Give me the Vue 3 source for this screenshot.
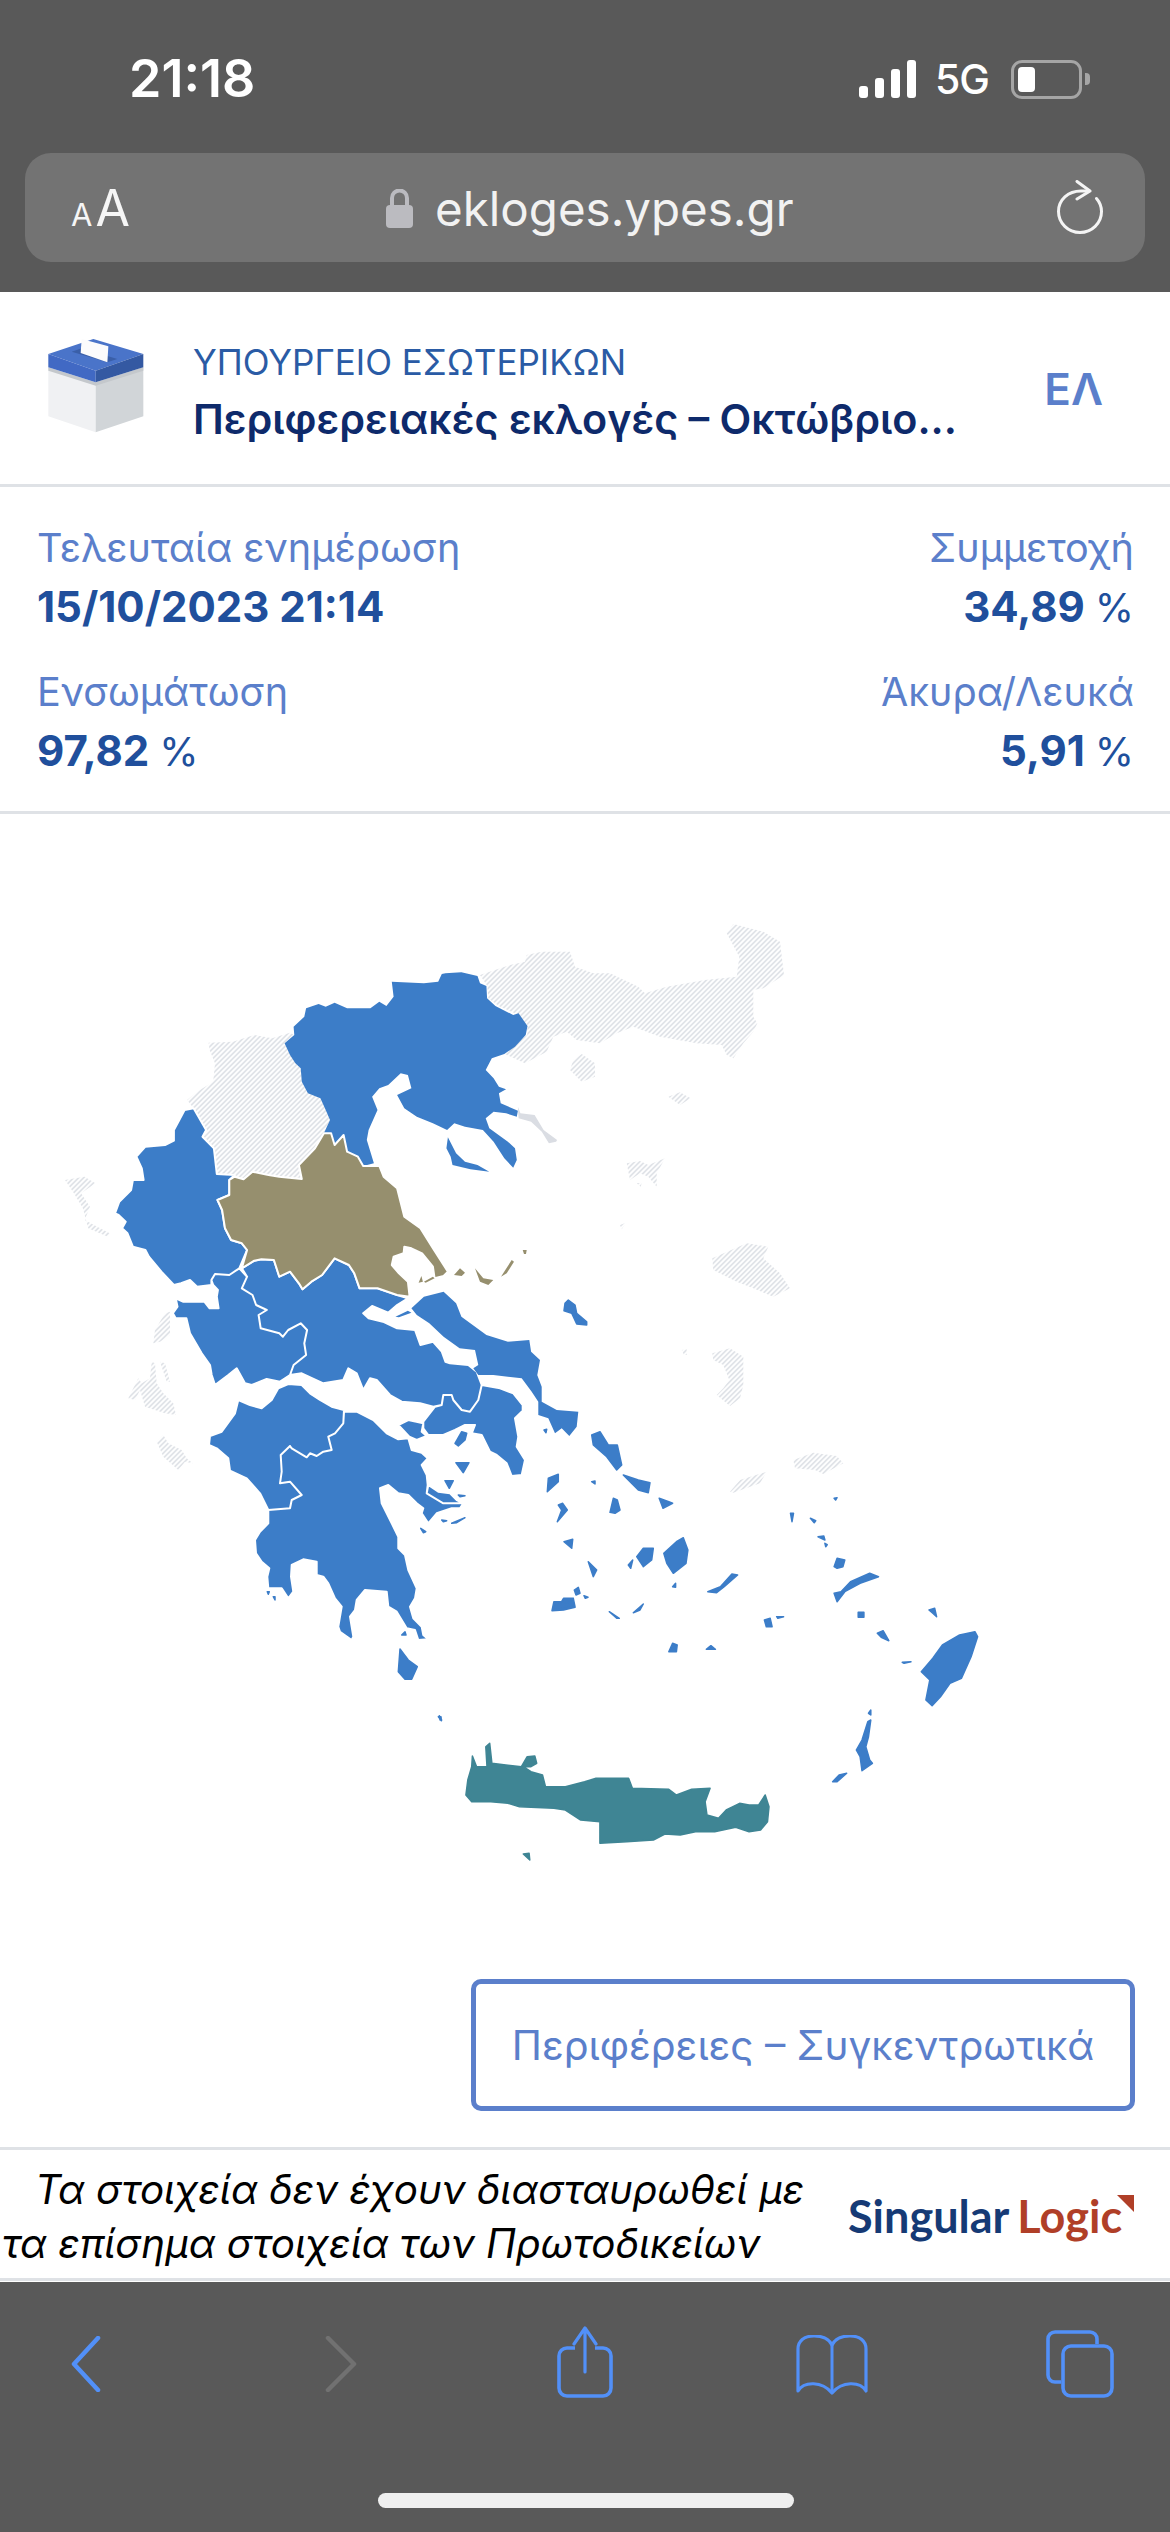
<script setup>
const zooms = {
  a: { x: 40, y: 900, sx: 2.8 },
  b: { x: 400, y: 900, sx: 3 },
  c: { x: 160, y: 1350, sx: 3 },
  d: { x: 420, y: 1400, sx: 2.613 },
  e: { x: 110, y: 1300, sx: 3 },
  f: { x: 680, y: 1320, sx: 3 }
}
function shape(...segments) {
  const pts = []
  for (const [z, text] of segments) {
    const m = zooms[z]
    for (const p of text.trim().split(/\s+/)) {
      const [x, y] = p.split(',').map(Number)
      pts.push((m.x + x / m.sx).toFixed(1) + ' ' + (m.y + y / 3).toFixed(1))
    }
  }
  return 'M' + pts.join('L') + 'Z'
}
function many(z, list) {
  return list.map((t) => shape([z, t])).join('')
}

const hatched = [
  shape(['b', '240,225 330,195 375,185 380,165 425,155 510,155 525,200 580,220 630,220 715,260 735,280 800,260 915,240 1010,230 1018,170 980,100 1000,72 1090,95 1140,125 1152,225 1090,265 1060,270 1060,350 1072,370 1060,395 1030,430 1000,475 980,465 965,435 890,430 780,410 700,380 650,400 600,430 530,420 500,395 460,410 440,455 375,490 310,460 345,430 382,405 382,375 345,340 300,320 265,295 262,258']),
  shape(['a', '472,428 540,425 600,405 650,415 700,398 712,405 685,430 700,465 730,505 733,545 750,580 785,595 800,630 812,660 795,700 770,745 725,795 733,837 670,830 640,825 595,815 570,838 545,825 495,822 485,790 470,745 455,710 465,690 430,625 412,600 440,575 485,545 490,490 475,450']),
  many('b', [
    '510,510 520,480 545,462 585,490 585,530 545,545',
    '805,590 840,577 872,595 840,615',
    '680,790 720,783 745,795 795,775 770,820 770,860 745,830 720,820 690,840',
    '710,850 725,848 722,860',
    '660,975 678,968 665,988',
    '937,1075 1040,1030 1105,1040 1090,1075 1140,1120 1170,1165 1120,1190 1060,1165 1010,1145 940,1110'
  ]),
  many('a', [
    '70,840 125,830 155,850 115,880 140,920 125,960 195,1000 190,1010 135,985 120,925 95,880'
  ]),
  many('e', [
    '130,130 135,90 165,40 180,35 180,105 150,125',
    '150,185 165,190 180,245 170,245',
    '55,295 85,235 95,250 120,235 125,185 135,190 140,250 160,280 190,310 198,345 165,340 105,320 90,270 75,300',
    '140,425 160,405 175,430 215,450 230,475 248,490 225,485 205,510 160,470'
  ]),
  many('f', [
    '97,100 150,85 190,110 190,195 180,235 150,258 110,225 130,205 148,180 130,135 100,120',
    '150,515 180,480 260,455 240,490 160,518',
    '340,420 400,398 470,408 490,430 430,462 405,450 345,445',
    '5,90 20,88 20,105 12,105'
  ])
].join('')

const athos = shape(['a', '1338,620 1345,640 1385,645 1410,690 1448,720 1445,725 1425,730 1405,695 1375,665 1340,655'])

const macedonia =
  shape(['a', '1135,220 1180,217 1225,228 1232,250 1250,258 1252,295 1275,318 1325,345 1340,340 1365,378 1360,405 1330,440 1300,462 1265,475 1248,510 1270,535 1285,560 1305,568 1285,580 1290,610 1338,632 1335,650 1305,640 1270,635 1248,655 1258,685 1310,725 1330,745 1335,780 1325,803 1300,775 1270,725 1240,690 1190,680 1160,670 1140,690 1100,670 1055,650 1020,625 1000,585 1040,565 1030,525 1010,520 975,555 950,565 930,590 945,630 920,690 915,720 935,790 905,798 890,770 860,755 850,705 825,735 815,700 795,700 812,660 800,630 785,595 750,580 733,545 730,505 715,490 700,465 685,430 712,405 710,380 740,350 745,325 780,312 800,320 825,308 860,325 890,325 925,325 950,305 970,318 990,290 985,245 1075,250 1115,245 1125,222']) +
  shape(['a', '1142,712 1165,760 1190,785 1225,795 1258,815 1205,808 1155,795 1150,770 1138,745'])

const thessaly =
  shape(['a', '795,700 815,700 825,735 850,705 860,755 890,770 905,798 950,798 962,830 1000,865 1020,950 1065,985 1100,1045 1142,1115 1130,1128 1105,1135 1100,1100 1070,1060 1040,1045 1020,1040 1018,1060 990,1070 985,1095 1005,1120 1030,1145 1035,1190 1000,1185 945,1165 895,1165 880,1120 865,1095 825,1075 790,1125 760,1145 735,1168 725,1150 700,1115 670,1130 655,1080 620,1078 600,1082 565,1105 580,1050 565,1030 535,1020 518,985 510,930 497,900 530,885 530,840 545,830 570,838 595,815 640,825 670,830 733,837 725,795 770,745'])

const thessalyIslands = many('b', [
  '162,1125 180,1105 195,1118 185,1128',
  '225,1105 250,1135 280,1140 265,1155 240,1145',
  '303,1130 335,1080 342,1085 320,1120',
  '368,1050 380,1050 378,1062 372,1062'
]) + many('a', [
  '1060,1148 1068,1128 1072,1145',
  '1075,1145 1100,1130 1105,1135 1080,1148'
])

const mainland = [
  shape(['a', '405,630 430,625 465,690 455,710 487,745 495,822 545,825 530,840 530,885 497,900 510,930 518,985 535,1020 565,1030 580,1050 558,1105 530,1125 490,1122 480,1140 480,1155 440,1160 420,1140 395,1150 375,1155 340,1115 305,1070 295,1050 260,1040 245,1000 230,985 240,965 220,945 210,940 222,905 255,870 260,840 290,840 285,805 270,770 295,740 350,735 375,722 375,690 390,660']),
  shape(
    ['a', '558,1105 580,1130 565,1165 595,1185 605,1215 635,1230 612,1245 618,1285 670,1300 680,1310 695,1290 730,1270 748,1290 740,1330 745,1365 710,1395'],
    ['c', '390,75 360,95 320,87 275,105 255,100 230,55 205,75 165,105 155,75 150,45 125,10'],
    ['a', '420,1300 410,1255 380,1255 372,1240 385,1220 380,1195 400,1205 460,1205 475,1225 500,1225 495,1190 498,1170 485,1155 480,1140 490,1122 530,1125']
  ),
  shape(
    ['a', '565,1105 600,1082 620,1078 655,1080 670,1130 700,1115 725,1150 735,1168 760,1145 790,1125 825,1075 865,1095 880,1120 895,1165 945,1165 1000,1185 1030,1195 1000,1215 975,1238 930,1218 905,1240 920,1255 960,1265 1000,1285 1050,1290 1065,1335 1100,1325 1125,1355 1135,1385'],
    ['c', '870,40 925,45 950,65 965,105 955,150 930,185 905,180 880,150 875,135 850,135 845,165 820,170 780,160 725,155 690,135 650,90 630,85 610,120 590,70 565,55 550,90 490,100 425,70 390,75'],
    ['a', '710,1395 745,1365 740,1330 748,1290 730,1270 695,1290 680,1310 670,1300 618,1285 612,1245 635,1230 605,1215 595,1185 565,1165 580,1130']
  ),
  shape(['c', '965,105 1020,115 1060,130 1088,165 1088,182 1065,205 1075,260 1070,290 1095,330 1085,375 1055,378 1040,340 1010,315 990,305 965,255 935,250 945,225 915,225 885,240 850,255 805,255 790,235 790,215 825,170 845,165 850,135 875,135 880,150 905,180 930,185 955,150']),
  shape(['c', '235,150 270,165 305,175 335,150 355,115 385,102 425,105 450,130 480,150 515,170 552,180 550,220 525,250 505,260 515,300 490,305 470,318 450,310 440,322 395,295 390,288 362,315 365,365 360,400 390,395 425,435 395,450 390,475 325,480 300,430 260,385 210,362 205,325 170,295 147,285 150,258 185,245 225,190']),
  shape(['c', '552,185 590,185 640,210 680,250 715,268 745,265 755,300 785,308 803,325 785,345 800,375 803,405 800,430 850,460 885,460 910,460 900,475 875,475 830,490 805,520 785,490 790,475 770,460 745,435 715,430 685,405 660,415 665,460 695,520 715,560 715,595 735,615 745,660 770,715 765,745 750,770 760,805 785,830 790,855 805,868 775,870 765,840 740,835 710,785 685,770 680,725 615,720 590,750 585,780 570,800 580,860 575,870 540,845 535,830 545,770 525,745 505,700 490,680 470,675 470,635 430,628 395,645 393,680 400,725 385,745 365,715 325,715 322,680 328,655 305,635 288,610 285,570 300,545 325,520 325,480 390,475 395,450 425,435 390,395 360,400 365,365 362,315 390,288 395,295 440,322 450,310 470,318 490,305 515,300 505,260 525,250 550,220']),
  shape(['c', '805,405 835,425 870,430 890,450 910,460 885,460 850,460 800,430']),
  shape(['c', '715,225 745,210 790,220 785,245 800,258 770,270 748,260'])
].join('')

const evia = shape(
  ['a', '1075,1190 1130,1175 1165,1210 1180,1250 1250,1305 1310,1325 1370,1320 1375,1355 1400,1380 1390,1440'],
  ['c', '1105,0 1140,30 1128,65 1145,110 1145,155 1190,180 1255,185 1250,230 1228,258 1205,235 1185,250 1165,205 1135,195 1135,155 1115,125 1085,85 1000,75 955,75 940,55 955,45 945,0'],
  ['a', '1175,1345 1130,1310 1090,1270 1055,1245 1040,1225']
) + shape(['a', '995,1250 1030,1232 1040,1238 1005,1252'])

const blueIslands = many('c', [
  '885,280 905,245 920,250 915,270 895,288',
  '888,338 927,338 910,368',
  '855,392 880,392 868,415',
  '875,520 915,503 890,518',
  '782,535 797,545 790,548',
  '845,510 860,512 850,515',
  '895,435 915,437 900,440',
  '720,897 745,930 772,950 755,988 735,988 715,965',
  '725,855 735,845 738,855',
  '838,1097 845,1110 840,1110',
  '322,725 328,725 325,733',
  '340,740 345,740 345,750',
  '1295,255 1320,245 1345,285 1372,285 1385,345 1370,360 1340,320 1300,285',
  '1390,375 1435,390 1470,398 1465,428 1435,420',
  '1162,425 1165,385 1195,373 1195,395',
  '1295,395 1305,393 1305,402',
  '1192,515 1205,480 1195,465 1208,460 1222,480',
  '1350,487 1360,445 1372,450 1380,480 1365,490',
  '1212,575 1238,568 1235,595',
  '1285,635 1310,660 1300,680',
  '1430,620 1450,595 1480,595 1475,630 1450,650',
  '1405,645 1418,630 1412,655',
  '1180,780 1185,755 1208,760 1215,755 1222,760 1240,745 1245,770 1210,775',
  '1243,720 1255,712 1260,730 1248,735',
  '1272,737 1284,742 1276,745',
  '1348,785 1378,805 1370,805',
  '1420,788 1450,762 1440,780',
  '1152,240 1160,238 1158,248'
]) + many('b', [
  '495,1210 505,1200 525,1215 530,1240 560,1265 560,1275 530,1272 515,1240 492,1232'
]) + many('d', [
  '637,460 670,425 688,413 700,450 695,490 662,520 645,490',
  '752,575 785,560 815,522 830,525 795,560 775,578',
  '660,730 672,735 670,755 650,755',
  '748,748 760,737 772,748',
  '900,660 915,655 920,680 905,680',
  '932,650 950,650 935,655',
  '1082,580 1100,575 1125,545 1175,520 1198,530 1150,550 1110,575 1090,605',
  '1082,500 1090,475 1110,480 1105,500 1090,505',
  '1040,410 1055,408 1058,420',
  '1058,430 1064,434 1060,440',
  '968,340 976,340 972,365',
  '1020,355 1034,362 1030,368',
  '1082,295 1090,293 1086,300',
  '1145,637 1160,637 1160,652 1145,652',
  '1195,700 1210,692 1225,722 1205,712',
  '1330,630 1345,625 1350,650 1340,640',
  '1310,815 1340,775 1365,735 1410,705 1450,695 1457,710 1440,770 1415,835 1385,850 1360,890 1338,917 1322,900 1332,840',
  '1260,787 1283,785 1265,790',
  '1140,1050 1155,1020 1170,965 1178,960 1172,1010 1165,1040 1175,1080 1182,1090 1155,1112 1150,1070',
  '1172,940 1178,930 1178,945',
  '1078,1145 1095,1125 1115,1120 1090,1145',
  '625,295 650,305 660,310 635,325',
  '660,560 668,550 668,562',
  '48,950 55,950 56,962',
  '345,632 350,605 370,605 375,595 400,595 405,622 375,630'
])

const crete = shape(['d', '120,1185 125,1140 135,1100 137,1068 148,1100 175,1100 172,1040 182,1030 188,1090 265,1100 280,1070 300,1068 305,1090 290,1100 270,1100 290,1115 320,1125 328,1160 380,1160 430,1145 460,1135 545,1135 555,1165 650,1168 670,1185 710,1168 758,1165 745,1205 750,1245 780,1255 800,1230 835,1210 860,1215 885,1215 902,1185 912,1220 908,1265 890,1290 860,1295 825,1282 770,1295 720,1295 680,1305 640,1302 610,1320 540,1325 470,1330 470,1265 420,1260 380,1230 350,1225 260,1220 230,1210 185,1205 135,1205']) +
  shape(['d', '270,1362 285,1360 287,1380'])
</script>

<template>
  <div class="screen">
    <header class="browser">
      <div class="status">
        <span class="time">21:18</span>
        <div class="indicators">
          <div class="signal"><i class="b1"></i><i class="b2"></i><i class="b3"></i><i class="b4"></i></div>
          <span class="net">5G</span>
          <div class="battery"><i></i></div>
          <div class="nub"></div>
        </div>
      </div>
      <div class="urlbar">
        <span class="aa"><small>A</small>A</span>
        <div class="address">
          <svg class="lock" viewBox="0 0 27 39" width="27" height="39">
            <path d="M6 18V9a7.500 7.500 0 0 1 15 0v9" fill="none" stroke="#bbbbc0" stroke-width="4" />
            <rect x="0" y="16" width="27" height="23" rx="4" fill="#bbbbc0" />
          </svg>
          <span class="host">ekloges.ypes.gr</span>
        </div>
        <svg class="reload" viewBox="0 0 46 54" width="46" height="54">
          <path d="M30 11H24C11 11 1.500 20 1.500 31.500a21.500 21 0 1 0 43 0c0-5-1.500-9-5-13" fill="none" stroke="#f4f4f4" stroke-width="3" stroke-linecap="round" />
          <path d="M20 1.500 33 11 20 19" fill="none" stroke="#f4f4f4" stroke-width="3" stroke-linecap="round" stroke-linejoin="round" />
        </svg>
      </div>
    </header>

    <section class="head">
      <svg class="logo" viewBox="0 0 390 345" width="130" height="115">
        <path d="M55 115 197 168V310L55 262Z" fill="#f0f1f3" />
        <path d="M197 168 340 115V262L197 310Z" fill="#d1d5d8" />
        <path d="M55 115 197 160 340 115V125L197 170 55 125Z" fill="#c4c8cc" />
        <path d="M55 75 190 30 340 75 197 125Z" fill="#4a74c9" />
        <path d="M55 75 197 125V160L55 115Z" fill="#4169c4" />
        <path d="M197 125 340 75V115L197 160Z" fill="#3459a2" />
        <path d="M125 68 155 58 262 90 232 100Z" fill="#3a5fa8" />
        <path d="M155 30 235 52 232 100 152 72Z" fill="#fbfbfc" />
      </svg>
      <div class="titles">
        <div class="ministry">ΥΠΟΥΡΓΕΙΟ ΕΣΩΤΕΡΙΚΩΝ</div>
        <div class="election">Περιφερειακές εκλογές – Οκτώβριο...</div>
      </div>
      <div class="lang">ΕΛ</div>
    </section>

    <section class="stats">
      <div class="stat">
        <div class="label">Τελευταία ενημέρωση</div>
        <div class="value">15/10/2023 21:14</div>
      </div>
      <div class="stat right">
        <div class="label">Συμμετοχή</div>
        <div class="value">34,89 <span>%</span></div>
      </div>
      <div class="stat">
        <div class="label">Ενσωμάτωση</div>
        <div class="value">97,82 <span>%</span></div>
      </div>
      <div class="stat right">
        <div class="label">Άκυρα/Λευκά</div>
        <div class="value">5,91 <span>%</span></div>
      </div>
    </section>

    <svg class="map" viewBox="0 814 1170 1165" width="1170" height="1165">
      <defs>
        <pattern id="hatch" patternUnits="userSpaceOnUse" width="3.536" height="3.536" patternTransform="rotate(-45)">
          <rect width="3.536" height="3.536" fill="#ffffff" />
          <rect width="3.536" height="1.700" fill="#e0e3e8" />
        </pattern>
      </defs>
      <path :d="hatched" fill="url(#hatch)" />
      <path :d="athos" fill="#dadde3" />
      <path :d="macedonia" fill="#3c7dc8" />
      <path :d="mainland" fill="#3c7dc8" stroke="#ffffff" stroke-width="2" stroke-linejoin="round" />
      <path :d="evia" fill="#3c7dc8" />
      <path :d="blueIslands" fill="#3c7dc8" stroke="#3c7dc8" stroke-width="1.500" stroke-linejoin="round" />
      <path :d="thessaly" fill="#968f6e" stroke="#ffffff" stroke-width="2" stroke-linejoin="round" />
      <path :d="thessalyIslands" fill="#968f6e" />
      <path :d="crete" fill="#3f8594" stroke="#3f8594" stroke-width="1.500" stroke-linejoin="round" />
    </svg>

    <div class="action">
      <button class="regions">Περιφέρειες – Συγκεντρωτικά</button>
    </div>

    <footer class="note">
      <div class="disclaimer">
        <div class="l1">Τα στοιχεία δεν έχουν διασταυρωθεί με</div>
        <div class="l2">τα επίσημα στοιχεία των Πρωτοδικείων</div>
      </div>
      <div class="brand">
        <span class="sing">Singular</span><span class="logic">Logic</span>
        <svg class="corner" viewBox="0 0 17 17" width="17" height="17"><path d="M0 0H17V17Z" fill="#b03f28" /></svg>
      </div>
    </footer>

    <nav class="toolbar">
      <div class="tools">
        <svg class="t-back" viewBox="0 0 30 56" width="30" height="56"><path d="M27 2 3 28 27 54" fill="none" stroke="#5290f8" stroke-width="4.500" stroke-linecap="round" stroke-linejoin="round" /></svg>
        <svg class="t-fwd" viewBox="0 0 32 56" width="32" height="56"><path d="M3 2 29 28 3 54" fill="none" stroke="#717171" stroke-width="4.500" stroke-linecap="round" stroke-linejoin="round" /></svg>
        <svg class="t-share" viewBox="0 0 56 72" width="56" height="72">
          <path d="M18 22H10a8 8 0 0 0-8 8v32a8 8 0 0 0 8 8h36a8 8 0 0 0 8-8V30a8 8 0 0 0-8-8H38" fill="none" stroke="#5290f8" stroke-width="3.600" />
          <path d="M28 46V2M17 18 28 2 39 18" fill="none" stroke="#5290f8" stroke-width="3.200" stroke-linecap="round" stroke-linejoin="round" />
        </svg>
        <svg class="t-book" viewBox="0 0 72 60" width="72" height="60">
          <path d="M36 10C32 2 24 1 18 1 8 1 2 6 2 14V56C8 46 26 46 36 58 46 46 64 46 70 56V14C70 6 64 1 54 1 48 1 40 2 36 10Z" fill="none" stroke="#5290f8" stroke-width="3.200" stroke-linejoin="round" />
          <path d="M36 10V58" stroke="#5290f8" stroke-width="3" />
        </svg>
        <svg class="t-tabs" viewBox="0 0 68 68" width="68" height="68">
          <path d="M51 14V9a7 7 0 0 0-7-7H9a7 7 0 0 0-7 7v36a7 7 0 0 0 7 7h6" fill="none" stroke="#5290f8" stroke-width="3.600" />
          <rect x="17" y="16" width="49" height="50" rx="8" fill="none" stroke="#5290f8" stroke-width="3.600" />
        </svg>
      </div>
      <div class="home"></div>
    </nav>
  </div>
</template>

<style scoped>
.screen {
  width: 1170px;
  height: 2532px;
  background: #fff;
  overflow: hidden;
  font-family: Inter, "Noto Sans", sans-serif;
  display: flex;
  flex-direction: column;
}
.browser {
  height: 292px;
  background: #595959;
  color: #fff;
  flex: none;
}
.status {
  height: 153px;
  display: flex;
  justify-content: space-between;
  padding: 59px 80px 0 129px;
  box-sizing: border-box;
}
.time {
  font-size: 52px;
  font-weight: 600;
  line-height: 40px;
}
.indicators {
  display: flex;
  height: 40px;
  align-items: center;
}
.signal {
  display: flex;
  align-items: flex-end;
  gap: 7px;
  height: 38px;
}
.signal i {
  width: 9px;
  background: #fff;
  border-radius: 3px;
  display: block;
}
.b1 { height: 12px; }
.b2 { height: 20px; }
.b3 { height: 29px; }
.b4 { height: 38px; }
.net {
  font-size: 41px;
  font-weight: 500;
  margin-left: 19px;
  letter-spacing: -1px;
}
.battery {
  width: 71px;
  height: 39px;
  margin-left: 22px;
  border: 3px solid #a5a5a5;
  border-radius: 11px;
  box-sizing: border-box;
  padding: 4px;
}
.battery i {
  display: block;
  width: 17px;
  height: 100%;
  background: #fff;
  border-radius: 4px;
}
.nub {
  width: 5px;
  height: 12px;
  background: #a5a5a5;
  border-radius: 0 4px 4px 0;
  margin-left: 3px;
}
.urlbar {
  margin: 0 25px;
  height: 109px;
  background: #737373;
  border-radius: 26px;
  display: flex;
  align-items: center;
  position: relative;
  padding: 0 42px 0 46px;
}
.aa {
  font-size: 50px;
  line-height: 1;
  color: #f6f6f6;
}
.aa small {
  font-size: 31px;
  margin-right: 3px;
}
.address {
  position: absolute;
  left: 361px;
  top: 33px;
  display: flex;
  align-items: center;
  gap: 22px;
}
.host {
  font-size: 47.500px;
  line-height: 45px;
  color: #f2f2f2;
}
.lock { flex: none; }
.reload { margin-left: auto; margin-top: -1px; }
.head {
  height: 195px;
  flex: none;
  box-sizing: border-box;
  border-bottom: 3px solid #dfe2e6;
  display: flex;
  align-items: center;
  padding-left: 30px;
  padding-right: 67px;
}
.logo { flex: none; margin-top: -3px; }
.titles { margin-left: 33px; margin-top: 8px; }
.ministry {
  font-size: 35px;
  line-height: 40px;
  color: #2a5ba5;
}
.election {
  font-size: 41.300px;
  font-weight: 600;
  line-height: 46px;
  margin-top: 14px;
  color: #0e2a6b;
}
.lang {
  margin-left: auto;
  font-size: 44px;
  font-weight: 600;
  color: #5b7fcb;
  margin-top: 2px;
}
.stats {
  height: 327px;
  flex: none;
  box-sizing: border-box;
  border-bottom: 3px solid #dfe2e6;
  padding: 37px 36px 0 37px;
  display: grid;
  grid-template-columns: 1fr 1fr;
  grid-auto-rows: 144px;
}
.stat.right { text-align: right; }
.label {
  font-size: 39.600px;
  line-height: 48px;
  color: #5b7fcb;
}
.value {
  font-size: 42px;
  font-weight: 700;
  line-height: 50px;
  margin-top: 10px;
  color: #204f9c;
}
.value span { font-weight: 400; font-size: 40px; }
.map {
  display: block;
  flex: none;
}
.action {
  height: 168px;
  flex: none;
  display: flex;
  justify-content: flex-end;
  align-items: flex-start;
  padding-right: 35px;
  box-sizing: border-box;
}
.regions {
  width: 664px;
  height: 132px;
  background: #fff;
  border: 5px solid #5b7fcb;
  border-radius: 10px;
  color: #5b7fcb;
  font: 400 40.600px Inter, "Noto Sans", sans-serif;
  padding: 0;
}
.note {
  height: 134px;
  flex: none;
  box-sizing: border-box;
  border-top: 3px solid #dfe2e6;
  border-bottom: 3px solid #dfe2e6;
  display: flex;
  color: #000;
}
.disclaimer {
  width: 840px;
  font-style: italic;
  font-size: 40.300px;
  line-height: 54px;
  white-space: nowrap;
  padding-top: 13px;
}
.l1 { padding-left: 35px; }
.l2 { padding-left: 2px; }
.brand {
  position: relative;
  padding: 38px 0 0 8px;
  font-family: Lato, "Open Sans", sans-serif;
  font-size: 45px;
  font-weight: 700;
  line-height: 56px;
  white-space: nowrap;
}
.sing { color: #163a75; }
.logic {
  color: #b03f28;
  margin-left: 8px;
}
.corner {
  position: absolute;
  left: 277px;
  top: 45px;
}
.toolbar {
  flex: 1;
  margin-top: 1px;
  background: #595959;
  position: relative;
}
.tools {
  height: 211px;
  position: relative;
}
.t-back { position: absolute; left: 71px; top: 54px; }
.t-fwd { position: absolute; left: 325px; top: 54px; }
.t-share { position: absolute; left: 557px; top: 44px; }
.t-book { position: absolute; left: 796px; top: 53px; }
.t-tabs { position: absolute; left: 1046px; top: 48px; }
.home {
  position: absolute;
  left: 378px;
  top: 211px;
  width: 416px;
  height: 15px;
  background: #efefef;
  border-radius: 8px;
}
</style>

<style>
html, body { margin: 0; background: #fff; }
</style>
